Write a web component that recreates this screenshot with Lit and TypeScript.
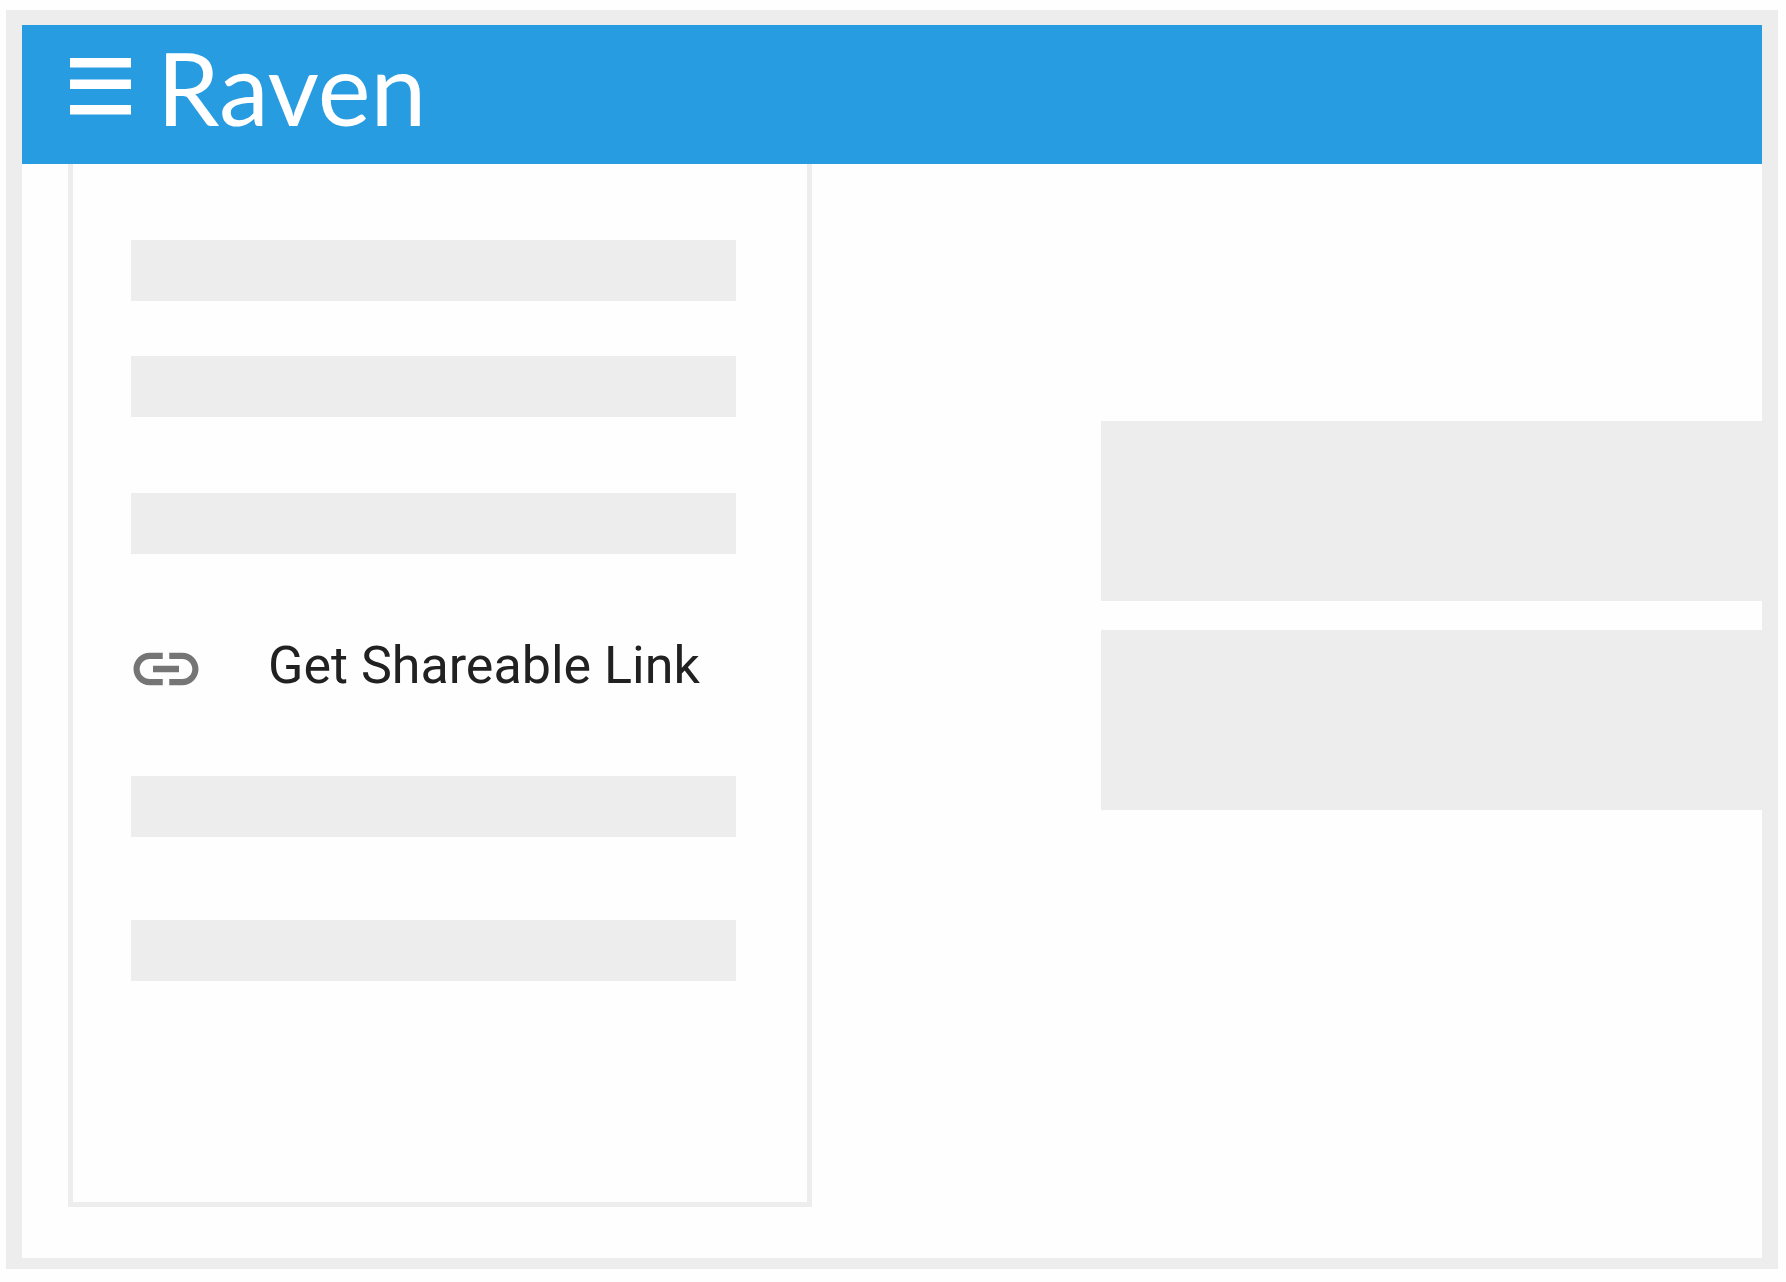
import { LitElement, html, css } from "lit";
import { customElement } from "lit/decorators.js";

@customElement("raven-header")
export class RavenHeader extends LitElement {
  static styles = css`
    :host {
      display: block;
    }
    .bar {
      box-sizing: border-box;
      display: flex;
      align-items: flex-start;
      gap: 26px;
      height: 139px;
      padding: 33px 48px 0;
      background: #289ce0;
      color: #fff;
    }
    .menu {
      display: block;
      padding: 0;
      border: 0;
      background: none;
      color: inherit;
      cursor: pointer;
    }
    .menu-icon {
      display: block;
      width: 61px;
      height: 57px;
      fill: currentColor;
    }
    .title {
      margin: 0;
      font: 400 100px/58px Lato, "Noto Sans", sans-serif;
    }
  `;

  render() {
    return html`
      <header class="bar">
        <button class="menu" type="button" aria-label="Menu">
          <svg class="menu-icon" viewBox="0 0 61 57" aria-hidden="true">
            <path d="M0 0h61v9.5H0zM0 21.5h61v9.5H0zM0 47h61v9.5H0z" />
          </svg>
        </button>
        <h1 class="title">Raven</h1>
      </header>
    `;
  }
}

@customElement("action-panel")
export class ActionPanel extends LitElement {
  static styles = css`
    :host {
      display: flex;
    }
    .panel {
      box-sizing: border-box;
      flex: 1;
      display: flex;
      flex-direction: column;
      padding: 76px 71px 0 58px;
      border: 5px solid #ededed;
      border-top: 0;
    }
    .row {
      flex: none;
      height: 61px;
      background: #ededed;
    }
    .pair {
      display: flex;
      flex-direction: column;
      gap: 55px;
      margin-bottom: 76px;
    }
    .lower {
      gap: 83px;
      margin-bottom: 0;
    }
    .link {
      display: flex;
      align-items: center;
      gap: 63px;
      height: 222px;
      color: #212121;
      font: 400 52px/60px Roboto, sans-serif;
      text-decoration: none;
      white-space: nowrap;
    }
    .link-icon {
      flex: none;
      width: 78px;
      height: 78px;
      margin: 8px 0 0 -4px;
      fill: #757575;
    }
    .link-text {
      padding-top: 2px;
    }
  `;

  render() {
    return html`
      <nav class="panel">
        <div class="pair">
          <div class="row"></div>
          <div class="row"></div>
        </div>
        <div class="row"></div>
        <a class="link" href="#share">
          <svg class="link-icon" viewBox="0 0 24 24" aria-hidden="true">
            <path
              d="M3.9 12c0-1.71 1.39-3.1 3.1-3.1h4V7H7c-2.76 0-5 2.24-5 5s2.24 5 5 5h4v-1.9H7c-1.71 0-3.1-1.39-3.1-3.1zM8 13h8v-2H8v2zm9-6h-4v1.9h4c1.71 0 3.1 1.39 3.1 3.1s-1.39 3.1-3.1 3.1h-4V17h4c2.76 0 5-2.24 5-5s-2.24-5-5-5z"
            />
          </svg>
          <span class="link-text">Get Shareable Link</span>
        </a>
        <div class="pair lower">
          <div class="row"></div>
          <div class="row"></div>
        </div>
      </nav>
    `;
  }
}

@customElement("app-root")
export class AppRoot extends LitElement {
  static styles = css`
    :host {
      box-sizing: border-box;
      display: flex;
      min-height: 100vh;
      padding: 10px 8px 13px 6px;
      background: #fefefe;
    }
    .frame {
      flex: 1;
      display: flex;
      flex-direction: column;
      border: 16px solid #ededed;
      border-top-width: 15px;
      border-bottom-width: 11px;
    }
    .body {
      flex: 1;
      display: grid;
      grid-template-columns: 744fr 661fr;
      column-gap: 289px;
      padding: 0 0 51px 46px;
    }
    .content {
      display: flex;
      flex-direction: column;
      gap: 29px;
      padding-top: 257px;
    }
    .card {
      height: 180px;
      background: #ededed;
    }
  `;

  render() {
    return html`
      <div class="frame">
        <raven-header></raven-header>
        <div class="body">
          <action-panel></action-panel>
          <main class="content">
            <div class="card"></div>
            <div class="card"></div>
          </main>
        </div>
      </div>
    `;
  }
}
